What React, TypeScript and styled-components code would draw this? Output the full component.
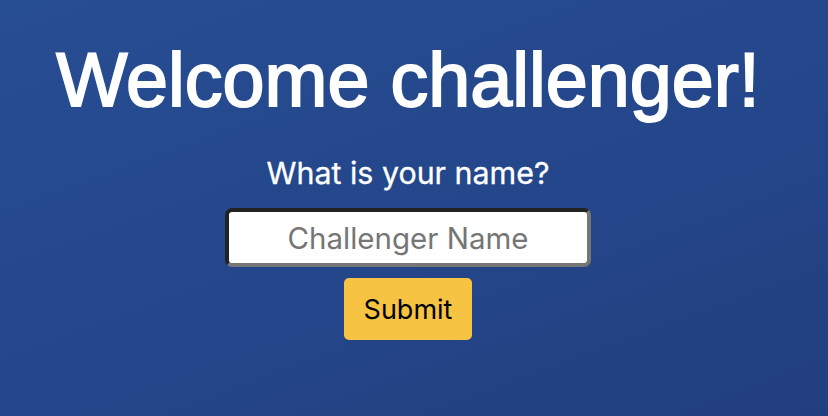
import React from "react";
import styled, { createGlobalStyle } from "styled-components";

const GlobalStyle = createGlobalStyle`
    html, body {
        margin: 0;
        padding: 0;
        height: 100%;
    }
    body {
        background: linear-gradient(160deg, #274d92 0%, #24468a 55%, #213f7e 100%);
        font-family: Inter, "Liberation Sans", sans-serif;
    }
`;

const Page = styled.div`
    width: 828px;
    height: 416px;
    display: flex;
    flex-direction: column;
    align-items: center;
    box-sizing: border-box;
    padding: 35px 12px 0 0;
`;

const Title = styled.h1`
    margin: 0;
    color: #ffffff;
    font-family: "Liberation Sans", Arial, sans-serif;
    font-weight: 400;
    font-size: 75.5px;
    line-height: 90px;
    -webkit-text-stroke: 1.9px #ffffff;
`;

const Prompt = styled.label`
    margin-top: 30px;
    color: #ffffff;
    font-size: 30.4px;
    line-height: 36px;
    -webkit-text-stroke: 0.3px #ffffff;
`;

const NameForm = styled.form`
    display: flex;
    flex-direction: column;
    align-items: center;
    gap: 11px;
    margin-top: 17px;
`;

const NameInput = styled.input`
    width: 366px;
    height: 59px;
    box-sizing: border-box;
    border: 4px solid;
    border-color: #222222 #767676 #767676 #222222;
    border-radius: 7px;
    background: #ffffff;
    text-align: center;
    font-family: Inter, "Liberation Sans", sans-serif;
    font-size: 29.5px;
    color: #111111;
    outline: none;
    &::placeholder {
        color: #757575;
    }
`;

const SubmitButton = styled.button`
    width: 128px;
    height: 62px;
    border: none;
    border-radius: 5px;
    background: #f6c343;
    color: #000000;
    font-family: Inter, "Liberation Sans", sans-serif;
    font-size: 27px;
    cursor: pointer;
`;

const App = () => {
    return (
        <>
            <GlobalStyle />
            <Page>
                <Title>Welcome challenger!</Title>
                <Prompt htmlFor="challenger-name">What is your name?</Prompt>
                <NameForm onSubmit={(e) => e.preventDefault()}>
                    <NameInput id="challenger-name" type="text" placeholder="Challenger Name" />
                    <SubmitButton type="submit">Submit</SubmitButton>
                </NameForm>
            </Page>
        </>
    );
};

export default App;
